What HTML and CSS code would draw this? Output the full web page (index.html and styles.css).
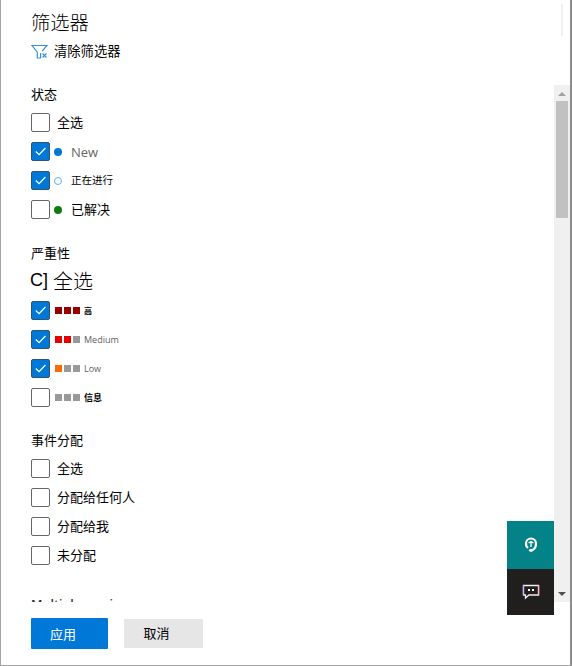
FILE: index.html
```html
<!DOCTYPE html>
<html lang="zh-CN">
<head>
<meta charset="utf-8">
<title>筛选器</title>
<link rel="stylesheet" href="styles.css">
</head>
<body>
<main class="panel">
  <header class="header">
    <h1 class="title">筛选器</h1>
    <div class="clear">
      <svg class="funnel" width="18" height="16" viewBox="0 0 18 16" fill="none" stroke="#3b8fd0" stroke-width="1.2"><path d="M11.2 7.2L16 1.5H1L6.3 8.2V14H9.6V9"/><path d="M11.5 9.5L15.5 13.5M15.5 9.5L11.5 13.5"/></svg>
      <span>清除筛选器</span>
    </div>
  </header>
  <div class="body">
    <div class="list">
      <section class="group">
        <h2>状态</h2>
        <div class="row"><i class="box"></i><span class="label">全选</span></div>
        <div class="row"><i class="box on"><svg viewBox="0 0 18 18"><path d="M4 9L7.5 12.3L14.2 5.3"/></svg></i><i class="dot blue"></i><span class="label status latin">New</span></div>
        <div class="row"><i class="box on"><svg viewBox="0 0 18 18"><path d="M4 9L7.5 12.3L14.2 5.3"/></svg></i><i class="dot ring"></i><span class="label status small">正在进行</span></div>
        <div class="row"><i class="box"></i><i class="dot green"></i><span class="label status">已解决</span></div>
      </section>
      <section class="group severity">
        <h2>严重性</h2>
        <div class="row large"><span class="bracket">C]</span><span>全选</span></div>
        <div class="row"><i class="box on"><svg viewBox="0 0 18 18"><path d="M4 9L7.5 12.3L14.2 5.3"/></svg></i><span class="bars high"><i></i><i></i><i></i></span><span class="level tiny">高</span></div>
        <div class="row"><i class="box on"><svg viewBox="0 0 18 18"><path d="M4 9L7.5 12.3L14.2 5.3"/></svg></i><span class="bars medium"><i></i><i></i><i></i></span><span class="level">Medium</span></div>
        <div class="row"><i class="box on"><svg viewBox="0 0 18 18"><path d="M4 9L7.5 12.3L14.2 5.3"/></svg></i><span class="bars low"><i></i><i></i><i></i></span><span class="level">Low</span></div>
        <div class="row"><i class="box"></i><span class="bars"><i></i><i></i><i></i></span><span class="level info">信息</span></div>
      </section>
      <section class="group assignment">
        <h2>事件分配</h2>
        <div class="row"><i class="box"></i><span class="label">全选</span></div>
        <div class="row"><i class="box"></i><span class="label">分配给任何人</span></div>
        <div class="row"><i class="box"></i><span class="label">分配给我</span></div>
        <div class="row"><i class="box"></i><span class="label">未分配</span></div>
      </section>
      <h2 class="next">Multiple services</h2>
    </div>
    <div class="scrollbar">
      <svg class="arrow" width="8" height="4" viewBox="0 0 8 4"><path d="M0 4L4 0L8 4Z" fill="#a3a3a3"/></svg>
      <div class="thumb"></div>
      <svg class="arrow end" width="8" height="4" viewBox="0 0 8 4"><path d="M0 0H8L4 4Z" fill="#505050"/></svg>
    </div>
  </div>
  <footer class="footer">
    <button class="btn primary">应用</button>
    <button class="btn">取消</button>
  </footer>
  <i class="edge"></i>
  <aside class="float">
    <div class="tile help">
      <svg width="14" height="16" viewBox="0 0 14 16" fill="none" stroke="#fff"><path d="M4.2 10.8Q2 10 2 6.5A5 5 0 0 1 12 6.5Q12 11.5 8.5 13" stroke-width="2.2"/><path d="M4.6 6L7 4.6L9.4 6M7 5V10" stroke-width="1.3"/><path d="M6.3 13.3H7.8" stroke-width="2.8" stroke-linecap="round"/></svg>
    </div>
    <div class="tile chat">
      <svg width="18" height="16" viewBox="0 0 18 16" fill="none"><path d="M1.5 1.5H16.5V11H7L3.5 14V11H1.5Z" stroke="#f5edf5" stroke-width="1.3"/><path d="M1 1V11.5" stroke="#6670e8" stroke-width=".7"/><path d="M17 1V11.5" stroke="#ef7377" stroke-width=".7"/><path d="M6 5H8V7H6ZM10 5H12V7H10Z" fill="#fff"/></svg>
    </div>
  </aside>
</main>
</body>
</html>
```
FILE: styles.css
```css
* { box-sizing: border-box; }
body { margin: 0; background: #fff; color: #000; font-family: "Liberation Sans", "Noto Sans CJK SC", sans-serif; font-size: 13px; }
h1, h2 { margin: 0; font-weight: 400; }
i { display: block; flex: none; }
.panel { position: relative; display: flex; flex-direction: column; width: 572px; height: 666px; border: solid #a3a3a3; border-width: 0 2px 1px 1px; border-right-color: #8c8c8c; overflow: hidden; }
.header { height: 85px; padding: 9px 0 0 29px; }
.title { height: 26px; line-height: 26px; font-size: 19.3px; font-weight: 300; font-family: "Noto Sans CJK SC", sans-serif; padding-left: 1px; }
.clear { display: flex; align-items: center; gap: 5px; height: 31px; padding-left: 1px; font-size: 13.3px; }
.funnel { display: block; margin-top: 2px; }
.body { display: flex; justify-content: space-between; height: 517px; }
.list { width: 300px; padding-left: 30px; overflow: hidden; }
.group { height: 160px; }
.group h2 { height: 23px; line-height: 20px; font-size: 13px; }
.group.severity { height: 187px; }
.group.assignment { height: 159px; }
.severity h2, .assignment h2 { height: 22px; line-height: 18px; }
.row { display: flex; align-items: center; height: 29px; white-space: nowrap; }
.box { width: 19px; height: 19px; border: 1px solid #666; border-radius: 2px; background: #fff; }
.box.on { background: #0078d7; border-color: #32556f; }
.box svg { display: block; width: 17px; height: 17px; fill: none; stroke: #fff; stroke-width: 1.3; }
.label { margin-left: 7px; margin-top: -2px; }
.dot { width: 8px; height: 8px; margin-left: 4px; border-radius: 50%; }
.blue { background: #0078d7; }
.ring { border: 1px solid #68afe9; }
.green { background: #107c10; }
.status { margin-left: 9px; }
.latin { margin-top: 1px; font-family: "Open Sans", sans-serif; font-size: 13px; color: #666; }
.small { font-size: 10.5px; }
.large { font-size: 20px; gap: 5px; margin-left: -1px; font-weight: 300; }
.large span { margin-top: -2px; }
.bracket { font-size: 18px; font-weight: 400; }
.bars { display: flex; gap: 2px; margin-left: 5px; }
.bars i { width: 7px; height: 7px; background: #999; }
.high i { background: #990000; }
.medium i:nth-child(-n+2) { background: #e60000; }
.low i:first-child { background: #ff6a00; }
.level { margin-left: 4px; font-family: "Open Sans", "Noto Sans CJK SC", sans-serif; font-size: 9px; color: #606060; }
.tiny { font-size: 8px; font-weight: 700; color: #000; }
.info { font-weight: 700; color: #000; }
.next { height: 20px; margin-top: 6px; font: 600 12.5px/16px "Open Sans", sans-serif; color: #333; }
.scrollbar { display: flex; flex-direction: column; align-items: center; width: 16px; background: #f0f0f0; }
.arrow { display: block; margin: 7px 0 5px; }
.thumb { width: 12px; height: 117px; background: #c1c1c1; }
.arrow.end { margin: auto 0 6px; }
.footer { display: flex; gap: 16px; align-items: center; height: 63px; padding-left: 30px; }
.btn { width: 79px; height: 29px; border: 0; padding: 0 14px 2px 0; background: #e6e6e6; color: #000; font: 13px "Noto Sans CJK SC", sans-serif; }
.primary { width: 77px; height: 31px; background: #0078d7; color: #fff; border-radius: 1px; padding-right: 13px; padding-bottom: 0; }
.edge { position: absolute; right: 7px; top: 4px; width: 2px; height: 32px; background: #efefef; }
.float { position: absolute; left: 506px; top: 521px; width: 47px; }
.tile { display: flex; align-items: center; justify-content: center; height: 48px; background: #038387; }
.chat { height: 46px; background: #201f1e; }
```
